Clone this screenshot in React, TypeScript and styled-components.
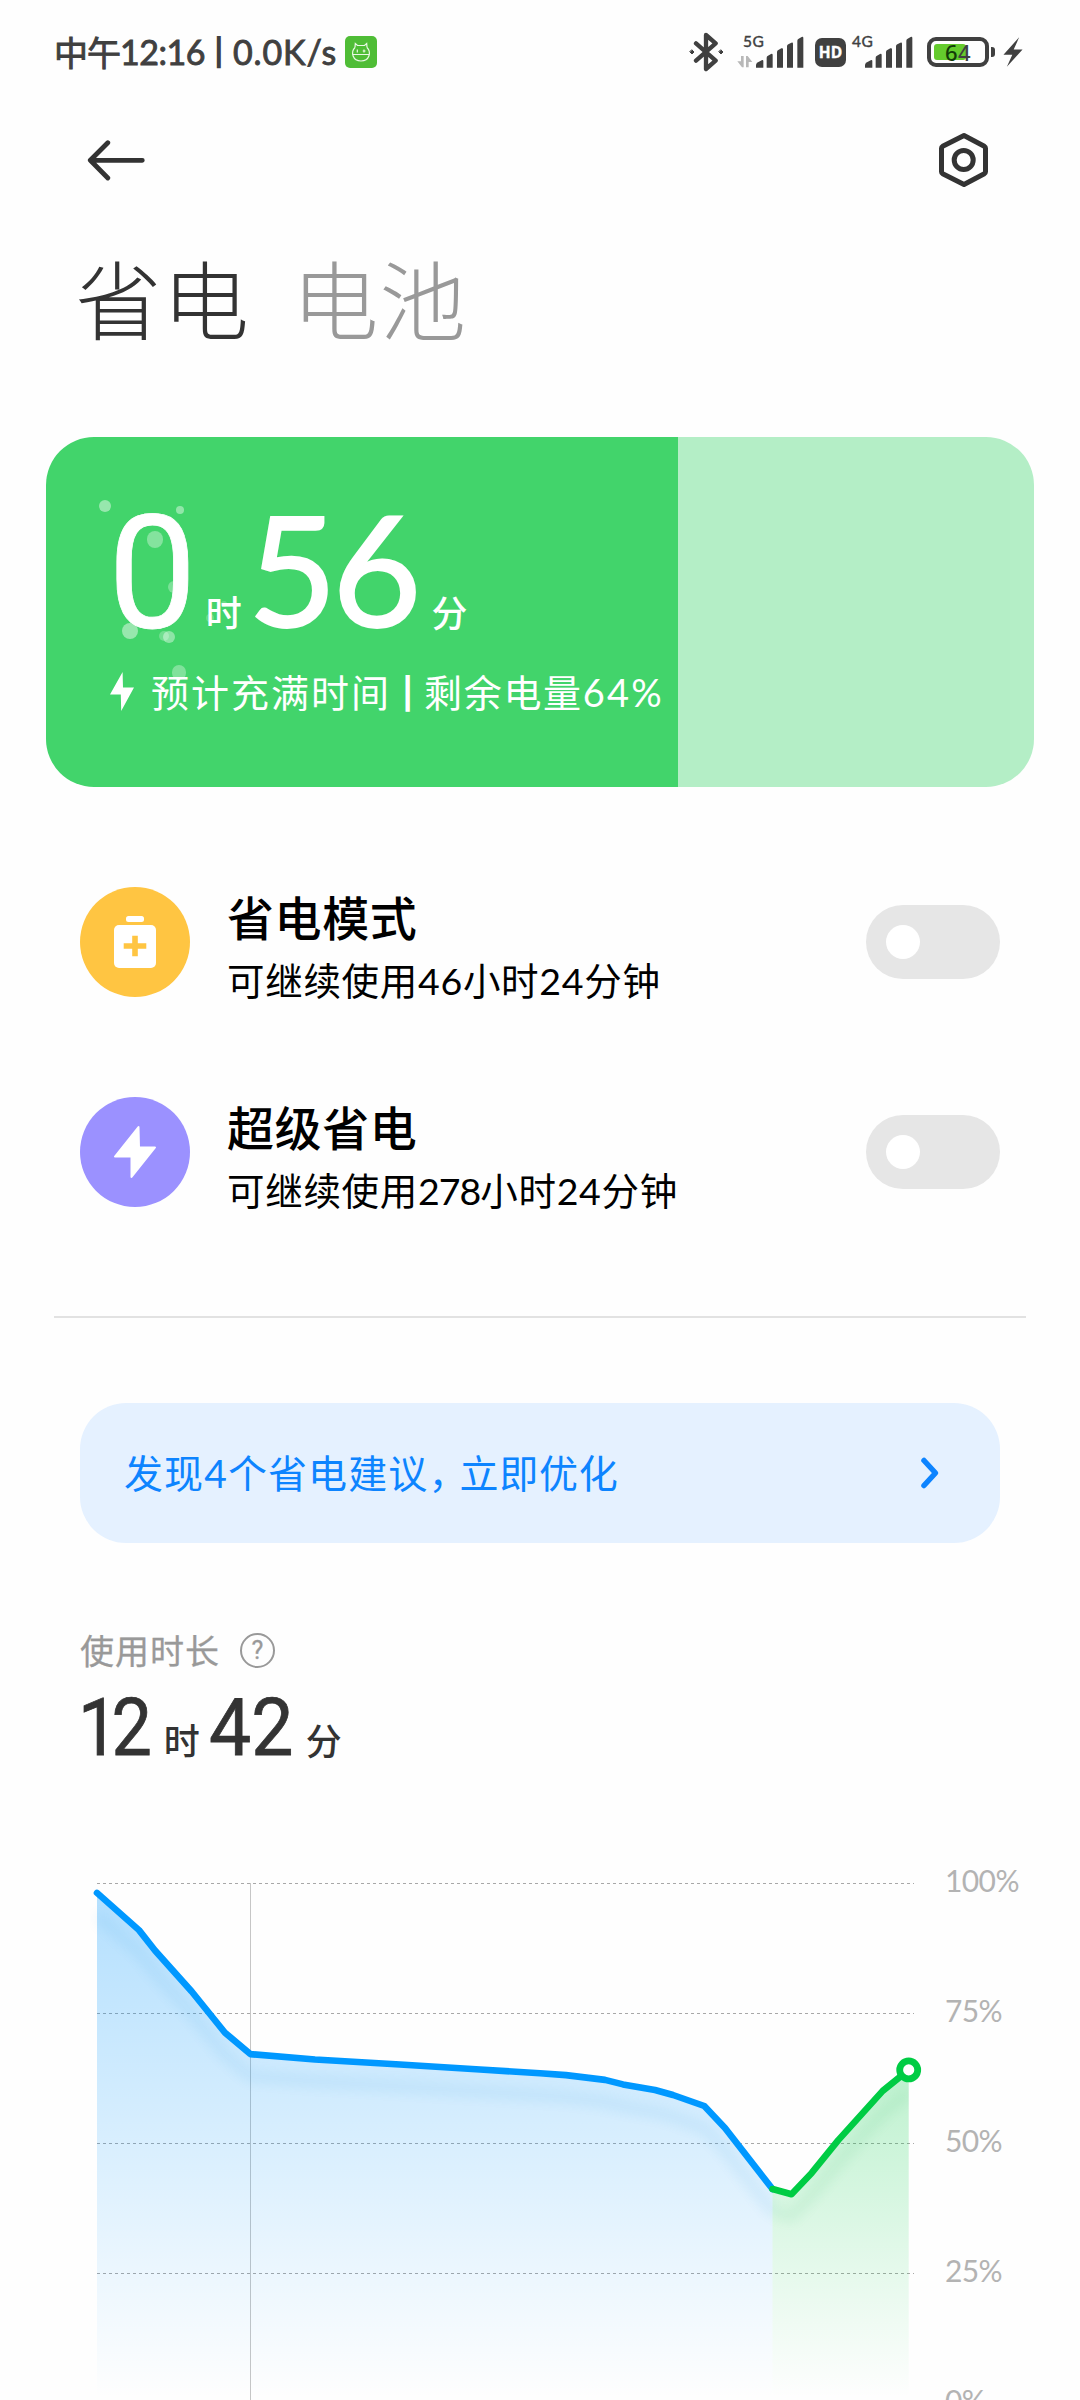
import React from "react";
import styled, { createGlobalStyle } from "styled-components";

const cjk = '"Noto Sans CJK SC", sans-serif';
const latin = `Lato, ${cjk}`;

const Global = createGlobalStyle`
  body { margin: 0; background: #fefefe; }
  * { box-sizing: border-box; }
`;

const Page = styled.div`
  width: 1080px;
  height: 2400px;
  overflow: hidden;
  background: #fefefe;
  font-family: ${latin};
  color: #333;
  display: flex;
  flex-direction: column;
`;

/* ---------- status bar ---------- */
const StatusBar = styled.header`
  height: 104px;
  flex: none;
  padding: 0 57px 0 54px;
  display: flex;
  align-items: center;
  color: #404040;
`;
const Clock = styled.span`
  display: flex;
  align-items: center;
  font-size: 34px;
  line-height: 40px;
  font-weight: 400;
  -webkit-text-stroke: 0.9px #404040;
`;
const Run = styled.span<{ $gap?: number; $font?: string; $ml?: number }>`
  letter-spacing: ${(p) => p.$gap ?? 0}px;
  font-family: ${(p) => p.$font ?? "inherit"};
  margin-left: ${(p) => p.$ml ?? 0}px;
`;
const Sep = styled.span<{ $w: number; $size: number }>`
  width: ${(p) => p.$w}px;
  height: 50px;
  padding-bottom: 7px;
  text-align: center;
  font: 500 ${(p) => p.$size}px/43px ${cjk};
  -webkit-text-stroke: 1.8px currentColor;
`;
const StatusIcons = styled.div`
  margin-left: auto;
  display: flex;
  align-items: center;
  height: 40px;
`;
const Signal = styled.div<{ $ml: number }>`
  position: relative;
  margin-left: ${(p) => p.$ml}px;
  height: 40px;
  display: flex;
  align-items: flex-end;
`;
const NetTag = styled.span<{ $x: number }>`
  position: absolute;
  left: ${(p) => p.$x}px;
  top: 0;
  font-size: 15.5px;
  line-height: 18px;
  letter-spacing: 0.5px;
  font-weight: 400;
  -webkit-text-stroke: 0.4px #404040;
`;
const HdBadge = styled.span`
  width: 31px;
  height: 29px;
  margin-left: 11px;
  border-radius: 7px;
  background: #404040;
  color: #fff;
  font: 700 15.5px/29px "Open Sans", sans-serif;
  -webkit-text-stroke: 0.4px #fff;
  text-align: center;
`;
const Battery = styled.span`
  position: relative;
  width: 62px;
  height: 30px;
  margin-left: 14px;
  border: 4px solid #404040;
  border-radius: 9px;
  padding: 3px;
  display: flex;
  &::after {
    content: "";
    position: absolute;
    right: -10px;
    top: 6px;
    width: 4px;
    height: 10px;
    border-radius: 0 3px 3px 0;
    background: #404040;
  }
`;
const BatteryFill = styled.span`
  width: 32px;
  height: 16px;
  border-radius: 3px;
  background: #64cb2d;
`;
const BatteryText = styled.span`
  position: absolute;
  inset: 0;
  text-align: center;
  font: 500 22px/23px "Noto Sans", sans-serif;
  color: #123c08;
  letter-spacing: 0.5px;
  & > i { font-style: normal; color: #404040; }
`;

/* ---------- navigation ---------- */
const Nav = styled.nav`
  height: 112px;
  flex: none;
  padding: 0 89px 0 87px;
  display: flex;
  align-items: center;
  justify-content: space-between;
`;
const Tabs = styled.div`
  margin-top: 21px;
  height: 120px;
  flex: none;
  padding-left: 75px;
  display: flex;
  gap: 42px;
`;
const Tab = styled.span<{ $active?: boolean }>`
  font: 300 86.5px/120px ${cjk};
  letter-spacing: 1px;
  color: ${(p) => (p.$active ? "#333" : "#999")};
`;

/* ---------- charge card ---------- */
const Card = styled.section`
  position: relative;
  margin: 80px 46px 0;
  height: 350px;
  flex: none;
  border-radius: 48px;
  overflow: hidden;
  background: linear-gradient(to right, #42d46b 632.5px, #b4eec6 632.5px);
  padding: 49px 0 0 64px;
  color: #fff;
`;
const Bubble = styled.i<{ $x: number; $y: number; $r: number; $o: number }>`
  position: absolute;
  left: ${(p) => p.$x - p.$r}px;
  top: ${(p) => p.$y - p.$r}px;
  width: ${(p) => p.$r * 2}px;
  height: ${(p) => p.$r * 2}px;
  border-radius: 50%;
  background: rgba(255, 255, 255, ${(p) => p.$o});
`;
const BigTime = styled.div`
  position: relative;
  height: 181px;
  padding-top: 2px;
  display: flex;
  align-items: baseline;
`;
const BigDigits = styled.span<{ $font: string; $size: number; $gap?: number; $ml?: number; $stroke?: number }>`
  font: 400 ${(p) => p.$size}px/160px ${(p) => p.$font}, sans-serif;
  letter-spacing: ${(p) => p.$gap ?? 0}px;
  margin-left: ${(p) => p.$ml ?? 0}px;
  -webkit-text-stroke: ${(p) => p.$stroke ?? 0}px #fff;
`;
const Unit = styled.span<{ $ml: number }>`
  font: 500 36px/1 ${cjk};
  margin-left: ${(p) => p.$ml}px;
`;
const CardInfo = styled.div`
  position: relative;
  height: 50px;
  display: flex;
  align-items: center;
  font-size: 38px;
  line-height: 50px;
`;

/* ---------- modes ---------- */
const Modes = styled.section`
  margin-top: 50px;
  padding: 0 80px;
  flex: none;
`;
const ModeRow = styled.div`
  height: 210px;
  display: flex;
  align-items: center;
  color: #000;
`;
const ModeIcon = styled.span<{ $bg: string }>`
  width: 110px;
  height: 110px;
  border-radius: 50%;
  background: ${(p) => p.$bg};
`;
const ModeText = styled.div`
  flex: 1;
  margin: 17px 0 0 37px;
  display: flex;
  flex-direction: column;
`;
const ModeTitle = styled.span`
  font: 500 47px/60px ${cjk};
  letter-spacing: 0.6px;
`;
const ModeSub = styled.span`
  font-size: 37.5px;
  line-height: 70px;
  letter-spacing: 0.7px;
`;
const Toggle = styled.button`
  width: 134px;
  height: 74px;
  padding: 20px;
  border: 0;
  border-radius: 37px;
  background: #e6e6e6;
  &::before {
    content: "";
    display: block;
    width: 34px;
    height: 34px;
    border-radius: 50%;
    background: #fff;
  }
`;
const Divider = styled.hr`
  margin: 59px 54px 0;
  width: 972px;
  height: 2px;
  flex: none;
  border: 0;
  background: #e2e2e2;
`;

/* ---------- advice ---------- */
const Advice = styled.button`
  margin: 85px 80px 0;
  height: 140px;
  flex: none;
  padding: 0 60px 0 44px;
  border: 0;
  border-radius: 46px;
  background: #e5f1ff;
  color: #0d84ff;
  display: flex;
  align-items: center;
  justify-content: space-between;
  font: 400 39px/60px ${latin};
`;

/* ---------- usage ---------- */
const UsageHead = styled.div`
  margin: 82px 0 0 80px;
  height: 50px;
  flex: none;
  display: flex;
  align-items: center;
  color: #999;
  font: 400 34px/50px ${cjk};
  -webkit-text-stroke: 0.3px #999;
`;
const Help = styled.span`
  width: 35px;
  height: 35px;
  margin-left: 20px;
  border: 2px solid #999;
  border-radius: 50%;
  font: 400 25px/31px Roboto, sans-serif;
  text-align: center;
`;
const UsageTime = styled.div`
  margin: 8px 0 0 78px;
  height: 90px;
  flex: none;
  display: flex;
  align-items: baseline;
`;
const UsageDigits = styled.span<{ $ml?: number; $gap?: number; $narrow: number }>`
  font: 400 79px/90px Roboto, sans-serif;
  letter-spacing: ${(p) => p.$gap ?? 0}px;
  margin-left: ${(p) => p.$ml ?? 0}px;
  transform: scaleX(${(p) => p.$narrow});
  transform-origin: left;
  -webkit-text-stroke: 0.8px #333;
`;

/* ---------- chart ---------- */
const ChartRow = styled.div`
  margin-top: 90px;
  height: 536px;
  flex: none;
  display: flex;
`;
const Plot = styled.svg`
  width: 945px;
  height: 537px;
  flex: none;
`;
const Axis = styled.div`
  display: flex;
  flex-direction: column;
  color: #b3b3b3;
  font-size: 30px;
  letter-spacing: -0.6px;
  & > span {
    height: 130px;
    flex: none;
    line-height: 34px;
  }
`;

const blueLine: [number, number][] = [
  [97, 1893.4], [139, 1930.6], [155, 1951], [191.7, 1992], [225, 2033.2], [250.3, 2054.6],
  [315, 2060], [400, 2065], [480, 2070], [540, 2073.8], [566, 2075.6], [605, 2080.4],
  [623, 2084.9], [655, 2090.5], [673, 2095.5], [704.3, 2106.5], [725, 2128.5], [772.5, 2189.5],
];
const greenLine: [number, number][] = [
  [772.5, 2189.5], [791.5, 2194.7], [811.7, 2173.4], [838.3, 2140.6], [882.7, 2091.4], [908.7, 2070.4],
];
const top = 1863.5;
const toPoints = (pts: [number, number][]) => pts.map(([x, y]) => `${x},${(y - top).toFixed(1)}`).join(" ");
const toArea = (pts: [number, number][]) =>
  `${pts[0][0]},540 ${toPoints(pts)} ${pts[pts.length - 1][0]},540`;

const Bars = ({ arrows }: { arrows?: boolean }) => (
  <svg width={arrows ? 67 : 49} height="40" viewBox={arrows ? "202 36 201 120" : "256 36 147 120"} fill="#404040">
    {arrows && (
      <g fill="#b8b8b8">
        <path d="M214 108h8v34h-5l-14-18h11z" />
        <path d="M229 142v-34h5l14 18h-11v16z" />
      </g>
    )}
    <path d="M259 143v-9q1-4 6-7l11-6q5-2 5 2v20z" />
    {[291, 322, 352, 383].map((x, i) => {
      const t = 103 - i * 17;
      return <path key={x} d={`M${x} 143V${t + 10}q0-4 4-6l9-5q5-2 5 3V143z`} />;
    })}
  </svg>
);

const StatusArea = () => (
  <StatusBar>
    <Clock>
      <Run $gap={-1} $font={cjk}>中午</Run>
      <Run $gap={-0.5}>12:16</Run>
      <Sep $w={28} $size={27}>|</Sep>
      <Run $gap={0.9}>0.0K/s</Run>
    </Clock>
    <svg width="32" height="32" viewBox="0 0 32 32" style={{ marginLeft: 8 }}>
      <rect width="32" height="32" rx="5" fill="#4fbd36" />
      <g fill="none" stroke="#e9f8e4" strokeWidth="1.2">
        <path d="M8 18.5h16M10 11.500l.3-4 2.200 2h7l2.200-2 .3 4" />
        <path d="M10 11.500C5.500 16 7.500 25 16 25s10.500-9 6-13.500" />
        <path d="M12.300 13.500v3M19 13.500v3M17.700 15h2.800" />
      </g>
    </svg>
    <StatusIcons>
      <svg width="36" height="40" viewBox="52 36 108 120" fill="none" stroke="#404040" strokeWidth="13" strokeLinejoin="round" strokeLinecap="round">
        <path d="M76 70l59 52-29 25V45l29 25-59 52" />
        <path d="M64 90l6 6-6 6-6-6zM151 90l6 6-6 6-6-6z" fill="#404040" strokeWidth="3" />
      </svg>
      <Signal $ml={13}>
        <NetTag $x={6}>5G</NetTag>
        <Bars arrows />
      </Signal>
      <HdBadge>HD</HdBadge>
      <Signal $ml={18}>
        <NetTag $x={-12}>4G</NetTag>
        <Bars />
      </Signal>
      <Battery>
        <BatteryFill />
        <BatteryText>6<i>4</i></BatteryText>
      </Battery>
      <svg width="20" height="30" viewBox="999 51 58 88" style={{ marginLeft: 14 }}>
        <path d="M1046 52l-46 51h26l-16 35 46-50h-26z" fill="#404040" />
      </svg>
    </StatusIcons>
  </StatusBar>
);

const bubbles = [
  [58.6, 68.7, 6, 0.45], [134, 73.3, 4, 0.42], [109, 102.3, 8.3, 0.35], [128, 150, 6, 0.3],
  [83.8, 194, 8.3, 0.45], [118, 199.3, 5, 0.25], [123.2, 200, 6, 0.4], [132.8, 235.7, 7.3, 0.33],
  [178, 167, 3, 0.2], [164, 181, 4, 0.2],
];

export default function App() {
  return (
    <Page>
      <Global />
      <StatusArea />
      <Nav>
        <svg width="60" height="44" viewBox="0 0 60 44" fill="none" stroke="#333" strokeWidth="4.8" strokeLinecap="round" strokeLinejoin="round">
          <path d="M20.8 4.7L3.3 22.3l17.5 17.700M3.3 22.3h52" />
        </svg>
        <svg width="54" height="58" viewBox="0 0 54 58" fill="none" stroke="#333" strokeWidth="5" strokeLinejoin="round">
          <path d="M27 4.500l20.300 10.800q1.200.8 1.200 2v23.400q0 1.200-1.200 2L27 53.500 5.700 42.700q-1.200-.8-1.200-2V17.300q0-1.200 1.200-2z" />
          <circle cx="26.700" cy="29" r="9.500" />
        </svg>
      </Nav>
      <Tabs>
        <Tab $active>省电</Tab>
        <Tab>电池</Tab>
      </Tabs>

      <Card>
        {bubbles.map(([x, y, r, o]) => (
          <Bubble key={`${x}-${y}`} $x={x} $y={y} $r={r} $o={o} />
        ))}
        <BigTime>
          <BigDigits $font="Roboto" $size={158} $ml={-2} $stroke={0.8}>0</BigDigits>
          <Unit $ml={9}>时</Unit>
          <BigDigits $font="Lato" $size={154} $gap={-5} $ml={6} $stroke={2}>56</BigDigits>
          <Unit $ml={15}>分</Unit>
        </BigTime>
        <CardInfo>
          <svg width="24" height="40" viewBox="0 0 24 40" fill="#fff">
            <path d="M12.600 0L0 22.500h10.800L11.200 39 24 15.500H13z" />
          </svg>
          <Run $gap={2} $ml={17}>预计充满时间</Run>
          <Sep $w={33} $size={31}>|</Sep>
          <Run $gap={1.7}>剩余电量</Run>
          <Run $gap={2.2}>64%</Run>
        </CardInfo>
      </Card>

      <Modes>
        <ModeRow>
          <ModeIcon $bg="#ffc542">
            <svg width="110" height="110" viewBox="0 0 110 110">
              <rect x="46" y="29" width="18" height="6" rx="2.500" fill="#fff" />
              <rect x="34" y="38" width="42" height="43" rx="5" fill="#fff" />
              <path d="M55 51.500v15M46.500 59h17" stroke="#ffc542" strokeWidth="5.600" strokeLinecap="square" />
            </svg>
          </ModeIcon>
          <ModeText>
            <ModeTitle>省电模式</ModeTitle>
            <ModeSub>可继续使用46小时24分钟</ModeSub>
          </ModeText>
          <Toggle aria-label="省电模式" />
        </ModeRow>
        <ModeRow>
          <ModeIcon $bg="#9b91ff">
            <svg width="110" height="110" viewBox="0 0 110 110">
              <path d="M58.500 30L35 59.500h16.500V80L75 50.500H59z" fill="#fff" stroke="#fff" strokeWidth="2" strokeLinejoin="round" />
            </svg>
          </ModeIcon>
          <ModeText>
            <ModeTitle>超级省电</ModeTitle>
            <ModeSub>可继续使用<Run $gap={-1}>278</Run>小时24分钟</ModeSub>
          </ModeText>
          <Toggle aria-label="超级省电" />
        </ModeRow>
      </Modes>
      <Divider />

      <Advice>
        <span>
          <Run $gap={1.1}>发现4个省电建议</Run>
          <Run $gap={-8}>，</Run>
          <Run $gap={0.8}>立即优化</Run>
        </span>
        <svg width="20" height="34" viewBox="0 0 20 34" fill="none" stroke="#0d84ff" strokeWidth="5.500" strokeLinecap="round" strokeLinejoin="round">
          <path d="M4 4.500L15.500 17 4 29.500" />
        </svg>
      </Advice>

      <UsageHead>
        <Run $gap={1}>使用时长</Run>
        <Help>?</Help>
      </UsageHead>
      <UsageTime>
        <UsageDigits $gap={-7.5} $narrow={0.91}>12</UsageDigits>
        <Unit $ml={12}>时</Unit>
        <UsageDigits $ml={9} $narrow={0.95}>42</UsageDigits>
        <Unit $ml={8}>分</Unit>
      </UsageTime>

      <ChartRow>
        <Plot viewBox="0 0 945 537">
          <defs>
            <linearGradient id="blueFill" gradientUnits="userSpaceOnUse" x1="0" y1="20" x2="0" y2="535">
              <stop offset="0" stopColor="#0096ff" stopOpacity="0.3" />
              <stop offset="1" stopColor="#0096ff" stopOpacity="0" />
            </linearGradient>
            <linearGradient id="greenFill" gradientUnits="userSpaceOnUse" x1="0" y1="200" x2="0" y2="535">
              <stop offset="0" stopColor="#00cc44" stopOpacity="0.26" />
              <stop offset="1" stopColor="#00cc44" stopOpacity="0" />
            </linearGradient>
            <filter id="soft" filterUnits="userSpaceOnUse" x="60" y="0" width="885" height="537">
              <feGaussianBlur stdDeviation="6" />
            </filter>
            <clipPath id="under">
              <rect x="90" y="0" width="819" height="537" />
            </clipPath>
          </defs>
          {[20.5, 150.5, 280.5, 410.5].map((y) => (
            <path key={y} d={`M97 ${y}H914`} stroke="#a8a8a8" strokeDasharray="3 3" />
          ))}
          <path d="M250.500 20V537" stroke="#c6c6c6" />
          <polygon points={toArea(blueLine)} fill="url(#blueFill)" />
          <polygon points={toArea(greenLine)} fill="url(#greenFill)" />
          <g clipPath="url(#under)">
            <g filter="url(#soft)" transform="translate(0 22)" fill="none" strokeWidth="12" opacity="0.07">
              <polyline points={toPoints(blueLine)} stroke="#0080d0" />
              <polyline points={toPoints(greenLine)} stroke="#00a040" />
            </g>
          </g>
          <g fill="none" strokeWidth="6.600" strokeLinejoin="round" strokeLinecap="round">
            <polyline points={toPoints(blueLine)} stroke="#0098ff" />
            <polyline points={toPoints(greenLine)} stroke="#00cc44" />
          </g>
          <circle cx="908.700" cy="206.900" r="9" fill="#fff" stroke="#00cc44" strokeWidth="6.800" />
        </Plot>
        <Axis>
          {["100%", "75%", "50%", "25%", "0%"].map((t) => (
            <span key={t}>{t}</span>
          ))}
        </Axis>
      </ChartRow>
    </Page>
  );
}
